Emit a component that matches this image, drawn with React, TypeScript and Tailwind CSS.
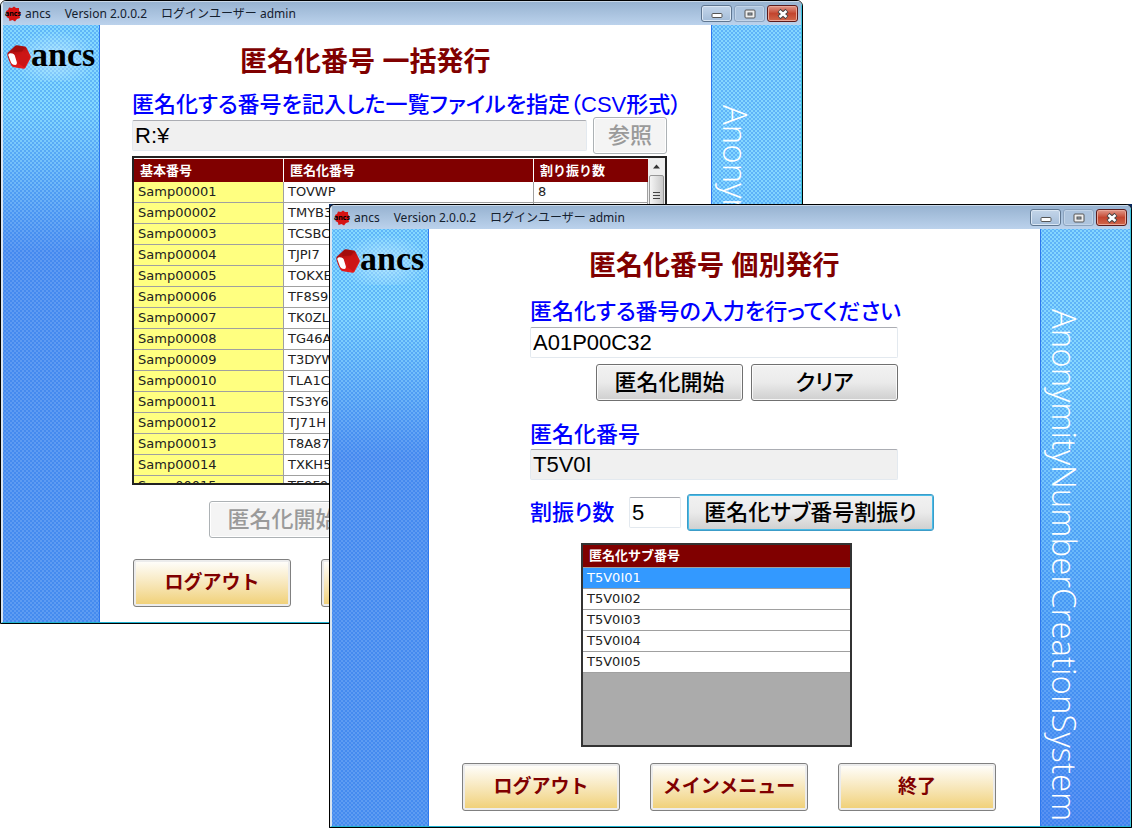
import { useId, type ReactNode } from "react";

const SANS = "font-['Noto_Sans','Noto_Sans_CJK_JP',sans-serif]";
const GOTHIC = "font-['Liberation_Sans','Noto_Sans_CJK_JP',sans-serif]";
const GRID = "font-['DejaVu_Sans','Noto_Sans_CJK_JP',sans-serif]";

const DOTS =
  "bg-[radial-gradient(circle,#0a64e84d_1px,transparent_1px),radial-gradient(circle,#0a64e84d_1px,transparent_1px)] bg-size-[4px_4px] [background-position:0_0,2px_2px]";

function Gem({ className }: { className: string }) {
  const id = useId();
  return (
    <svg viewBox="0 0 24 24" className={className} aria-hidden="true">
      <defs>
        <linearGradient id={id} x1="0" y1="0" x2="0.4" y2="1">
          <stop offset="0" stopColor="#8e0808" />
          <stop offset="0.5" stopColor="#c81414" />
          <stop offset="1" stopColor="#e81c1c" />
        </linearGradient>
      </defs>
      <path d="M0.300 10 Q0.100 8.500 1 7.500 L8 1 Q9 .2 10 .3 L18 1.600 Q19 1.800 19.500 2.800 L23.600 11 Q24 12 23.600 13 L18.500 22.700 Q18 23.900 16.500 23.800 L7 22.200 Q5.500 21.900 4.500 20.700 L2 15.500 Z" fill={`url(#${id})`} />
      <path d="M8 1.500 L18 2.300 L15 6.500 L6 7 Z" fill="#a30d0d" />
      <path d="M15 6.500 L23 12 L17.500 22.500 L11 18 Z" fill="#cc1515" />
      <path d="M1.200 10 Q1.600 8 3.500 8.200 L5.500 8.400 Q7.200 8.700 7.700 10.300 L9.900 17.500 Q10.200 19.800 8.500 20 L6.500 19.800 Q5 19.500 4 17.500 Z" fill="#fff" />
    </svg>
  );
}

function AppIcon() {
  return (
    <span className="relative grid size-4 shrink-0 place-items-center">
      <svg viewBox="0 0 16 16" className="absolute inset-0 size-4" aria-hidden="true">
        <path d="M1 5 L3 4 L4 1.500 L7 2 L9 0.500 L11 2 L14 2 L14 4.500 L16 7 L14.500 9.500 L15 12 L12 13 L10 15.500 L7.500 14 L4.500 15 L4 12.500 L1.500 11 L2 8 Z" fill="#d61313" />
      </svg>
      <span className="relative text-[7px] leading-none font-bold text-black">ancs</span>
    </span>
  );
}

function TitleBar() {
  return (
    <header className="flex h-6 items-center border-t border-[#c9d8e8] bg-linear-to-b from-[#98b3d1] to-[#bbd2ec] pr-[3px] pl-[2px]">
      <AppIcon />
      <div className={`flex flex-1 items-center gap-[14px] pl-1 text-xs whitespace-nowrap text-[#14202e] ${SANS}`}>
        <span>ancs</span>
        <span>Version 2.0.0.2</span>
        <span>ログインユーザー admin</span>
      </div>
      <div className="flex gap-[2px]">
        <button aria-label="最小化" className="grid h-[17px] w-[31px] place-items-center rounded-[3px] border border-[#5f7690] bg-linear-to-b from-[#c3d5e9] via-[#b4c9e1] via-50% to-[#a3bcd8] inset-ring inset-ring-[#dbe7f4]">
          <svg viewBox="0 0 12 12" className="size-3" aria-hidden="true">
            <rect x="1" y="5.500" width="10" height="4" rx="1" fill="#fff" stroke="#555" />
          </svg>
        </button>
        <button aria-label="最大化" className="grid h-[17px] w-[31px] place-items-center rounded-[3px] border border-[#8ba3bf] bg-[#adc4de] inset-ring inset-ring-[#c2d4e8]">
          <svg viewBox="0 0 12 12" className="size-3" aria-hidden="true">
            <rect x="1" y="2" width="10" height="8" rx="1" fill="#eee" stroke="#555" />
            <rect x="4" y="5" width="4" height="2" fill="#9ab" stroke="#555" />
          </svg>
        </button>
        <button aria-label="閉じる" className="grid h-[17px] w-[31px] place-items-center rounded-[3px] border border-[#5b1a1a] bg-linear-to-b from-[#e0978a] via-[#c3452f] via-50% to-[#d0664a] inset-ring inset-ring-[#eaa798]">
          <svg viewBox="0 0 12 12" className="size-3" aria-hidden="true">
            <path d="M2 2.500 L10 9.500 M10 2.500 L2 9.500" stroke="#444" strokeWidth="4.400" />
            <path d="M2.500 3 L9.500 9 M9.500 3 L2.500 9" stroke="#fff" strokeWidth="2.600" />
          </svg>
        </button>
      </div>
    </header>
  );
}

function AppWindow({ place, backing, children }: { place: string; backing: string; children: ReactNode }) {
  return (
    <section className={`absolute w-[803px] max-w-full ${place} ${backing}`}>
      <div className="overflow-hidden rounded-t-md border border-black bg-white">
        <div className="border-r border-b border-l-2 border-r-[#3cc3de] border-b-[#1fb2d0] border-l-[#d8e4f0]">
          <TitleBar />
          <div className="flex">
            <aside className="w-[97px] shrink-0 border-r border-[#2f78ee] bg-linear-to-b from-[#84d8ff] from-14% via-[#5e9af2] via-38% to-[#5e9cf2]">
              <div className={`h-full ${DOTS}`}>
                <div className="flex items-center bg-[radial-gradient(ellipse_at_55%_60%,#c8ecffb3,transparent_60%)] pt-3 pb-2 pl-1">
                  <Gem className="mt-[3px] size-6 shrink-0" />
                  <span className="text-[34px] leading-9 font-bold text-black font-['Liberation_Serif',serif]">ancs</span>
                </div>
              </div>
            </aside>
            <main className={`flex min-w-0 flex-1 flex-col pb-[15px] ${GOTHIC}`}>{children}</main>
            <aside className="w-[90px] shrink-0 border-l border-[#2f78ee] bg-linear-to-b from-[#84d6ff] from-25% via-[#60acf8] via-65% to-[#5890f2]">
              <div className={`h-full pt-20 pl-[3px] ${DOTS}`}>
                <span className="block text-[33px] leading-10 font-light whitespace-nowrap text-white [writing-mode:vertical-rl] font-['Open_Sans',sans-serif]">
                  AnonymityNumberCreationSystem
                </span>
              </div>
            </aside>
          </div>
        </div>
      </div>
    </section>
  );
}

function Title({ indent, children }: { indent: string; children: ReactNode }) {
  return (
    <h1 className={`mt-[19px] text-[27px] leading-9 font-bold whitespace-nowrap text-[#800000] ${indent}`}>{children}</h1>
  );
}

const LABEL = "text-[22px] leading-6 font-medium whitespace-nowrap text-[#0000ff] [font-feature-settings:'palt']";
const FIELD = "h-[31px] min-w-0 rounded-xs border border-[#e3e9ef] border-t-[#abadb3] px-[2px] text-[22px] text-black";
const BUTTON = "h-[37px] rounded-[3px] border text-[22px] leading-8 font-medium whitespace-nowrap [font-feature-settings:'palt']";
const BUTTON_ON = `${BUTTON} border-[#707070] bg-linear-to-b from-[#f2f2f2] via-[#ebebeb] via-49% to-[#cfcfcf] text-black inset-ring inset-ring-white/80`;
const BUTTON_FOCUS = `${BUTTON} border-[#3c9cc8] bg-linear-to-b from-[#f2f2f2] via-[#ebebeb] via-49% to-[#cfcfcf] text-black inset-ring inset-ring-[#48bce8]`;
const BUTTON_OFF = `${BUTTON} border-[#adb2b5] bg-[#f4f4f4] text-[#9a9a9a] inset-ring inset-ring-white`;

function Footer() {
  return (
    <footer className="flex gap-[30px] pl-[33px]">
      {["ログアウト", "メインメニュー", "終了"].map((name) => (
        <button
          key={name}
          className="h-12 w-[158px] rounded-[3px] border border-[#808080] bg-linear-to-b from-white to-[#f0cf72] text-[19px] font-bold whitespace-nowrap text-[#800000] inset-ring-2 inset-ring-[#ececec]"
        >
          {name}
        </button>
      ))}
    </footer>
  );
}

const SAMPLES = [
  "TOVWP", "TMYB3", "TCSBC", "TJPI7", "TOKXE", "TF8S9", "TK0ZL", "TG46A",
  "T3DYW", "TLA1C", "TS3Y6", "TJ71H", "T8A87", "TXKH5", "TE9F9",
];

function BatchWindow() {
  return (
    <AppWindow place="top-0 left-0" backing="bg-transparent">
      <Title indent="pl-[140px]">匿名化番号 一括発行</Title>
      <div className="mt-[13px] mr-[44px] ml-[32px] flex flex-col">
        <label htmlFor="csv" className={LABEL}>匿名化する番号を記入した一覧ファイルを指定（CSV形式）</label>
        <div className="flex items-center gap-[6px]">
          <input id="csv" readOnly defaultValue="R:¥" className={`flex-1 bg-[#f0f0f0] ${FIELD}`} />
          <button disabled className={`w-[74px] ${BUTTON_OFF}`}>参照</button>
        </div>
        <div className={`mt-[2px] flex h-[329px] overflow-hidden border-2 border-[#222] bg-white text-[13px] text-[#222] ${GRID}`}>
          <div className="flex-1">
            <table className="w-full table-fixed border-separate border-spacing-0">
              <colgroup>
                <col className="w-[150px]" />
                <col className="w-[250px]" />
                <col />
              </colgroup>
              <thead>
                <tr className="h-6 bg-[#800000] text-left leading-5 text-white">
                  <th className="border-t border-r border-white pl-[6px]">基本番号</th>
                  <th className="border-t border-r border-white pl-[6px]">匿名化番号</th>
                  <th className="border-t border-white pl-[6px]">割り振り数</th>
                </tr>
              </thead>
              <tbody>
                {SAMPLES.map((code, i) => (
                  <tr key={code} className="h-[21px] leading-5">
                    <td className="border-r border-b border-[#a0a0a0] bg-[#ffff80] pl-1">Samp{String(i + 1).padStart(5, "0")}</td>
                    <td className="border-r border-b border-[#a0a0a0] pl-1">{code}</td>
                    <td className="border-r border-b border-[#a0a0a0] pl-1">{i === 0 ? "8" : ""}</td>
                  </tr>
                ))}
              </tbody>
            </table>
          </div>
          <div className="flex w-[17px] flex-col items-center bg-[#eeeeee]">
            <svg viewBox="0 0 17 17" className="size-[17px]" aria-hidden="true">
              <path d="M5 10.500 L8.500 6.500 L12 10.500 Z" fill="#333" />
            </svg>
            <div className="flex h-10 w-[15px] flex-col items-center justify-center gap-[2px] rounded-xs border border-[#979797] bg-linear-to-r from-[#f5f5f5] to-[#c9c9c9]">
              <span className="h-px w-[7px] bg-[#444]" />
              <span className="h-px w-[7px] bg-[#444]" />
              <span className="h-px w-[7px] bg-[#444]" />
            </div>
          </div>
        </div>
      </div>
      <div className="mt-4 mb-[21px] flex pl-[109px]">
        <button disabled className={`w-[147px] ${BUTTON_OFF}`}>匿名化開始</button>
      </div>
      <Footer />
    </AppWindow>
  );
}

function SingleWindow() {
  return (
    <AppWindow place="top-[204px] left-[329px]" backing="bg-[#0a2a5e]">
      <Title indent="pl-[160px]">匿名化番号 個別発行</Title>
      <div className="mt-4 ml-[101px] flex flex-col items-start">
        <label htmlFor="number" className={LABEL}>匿名化する番号の入力を行ってください</label>
        <input id="number" defaultValue="A01P00C32" className={`mt-[3px] w-[368px] bg-white ${FIELD}`} />
        <div className="mt-[6px] flex w-[368px] justify-end gap-2">
          <button className={`w-[147px] ${BUTTON_ON}`}>匿名化開始</button>
          <button className={`w-[147px] ${BUTTON_ON}`}>クリア</button>
        </div>
        <label htmlFor="anon" className={`mt-[22px] ${LABEL}`}>匿名化番号</label>
        <input id="anon" readOnly defaultValue="T5V0I" className={`mt-[2px] w-[368px] bg-[#f0f0f0] ${FIELD}`} />
        <div className="mt-[14px] flex items-center">
          <label htmlFor="count" className={`w-[99px] ${LABEL}`}>割振り数</label>
          <input id="count" defaultValue="5" className={`w-[52px] bg-white ${FIELD}`} />
          <button className={`ml-[6px] w-[247px] ${BUTTON_FOCUS}`}>匿名化サブ番号割振り</button>
        </div>
      </div>
      <div className={`mt-3 mb-4 ml-[152px] h-[204px] w-[271px] border-2 border-[#333] bg-[#ababab] text-[13px] text-[#222] ${GRID}`}>
        <table className="w-full border-separate border-spacing-0">
          <thead>
            <tr className="h-[23px] bg-[#800000] text-left leading-5 text-white">
              <th className="border-b border-[#a0a0a0] pl-[6px]">匿名化サブ番号</th>
            </tr>
          </thead>
          <tbody>
            {["T5V0I01", "T5V0I02", "T5V0I03", "T5V0I04", "T5V0I05"].map((code, i) => (
              <tr key={code} className={i === 0 ? "bg-[#3399ff] text-white" : "bg-white"}>
                <td className="h-[21px] border-b border-[#a0a0a0] pl-1 leading-5">{code}</td>
              </tr>
            ))}
          </tbody>
        </table>
      </div>
      <Footer />
    </AppWindow>
  );
}

export default function App() {
  return (
    <div className="relative min-h-screen overflow-hidden bg-white">
      <BatchWindow />
      <SingleWindow />
    </div>
  );
}
